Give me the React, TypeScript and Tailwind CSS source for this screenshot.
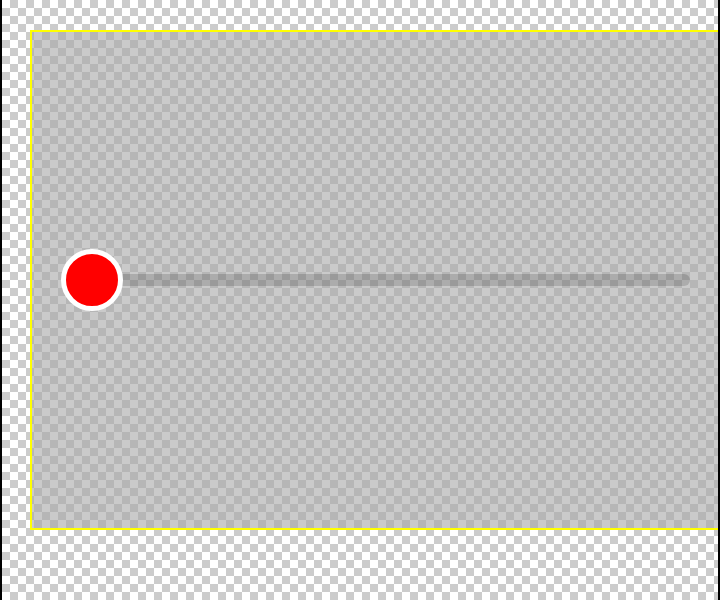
export default function App() {
  return (
    <div className="w-[720px] h-[600px] box-border overflow-hidden border-x-2 border-black pl-[28px] pt-[30px] bg-[repeating-conic-gradient(#cccccc_0_25%,#ffffff_0_50%)] bg-[length:16px_16px]">
      <div className="w-[700px] h-[500px] box-border border-2 border-[#ffff00] bg-[rgba(167,167,167,0.6)] flex items-center">
        <div className="relative ml-[58px] w-[600px] h-[12px] rounded-full bg-black/15 blur-[0.5px]"></div>
        <div className="absolute left-[61px] top-[249px] w-[62px] h-[62px] box-border rounded-full border-[5px] border-white bg-[#ff0000]"></div>
      </div>
    </div>
  );
}
